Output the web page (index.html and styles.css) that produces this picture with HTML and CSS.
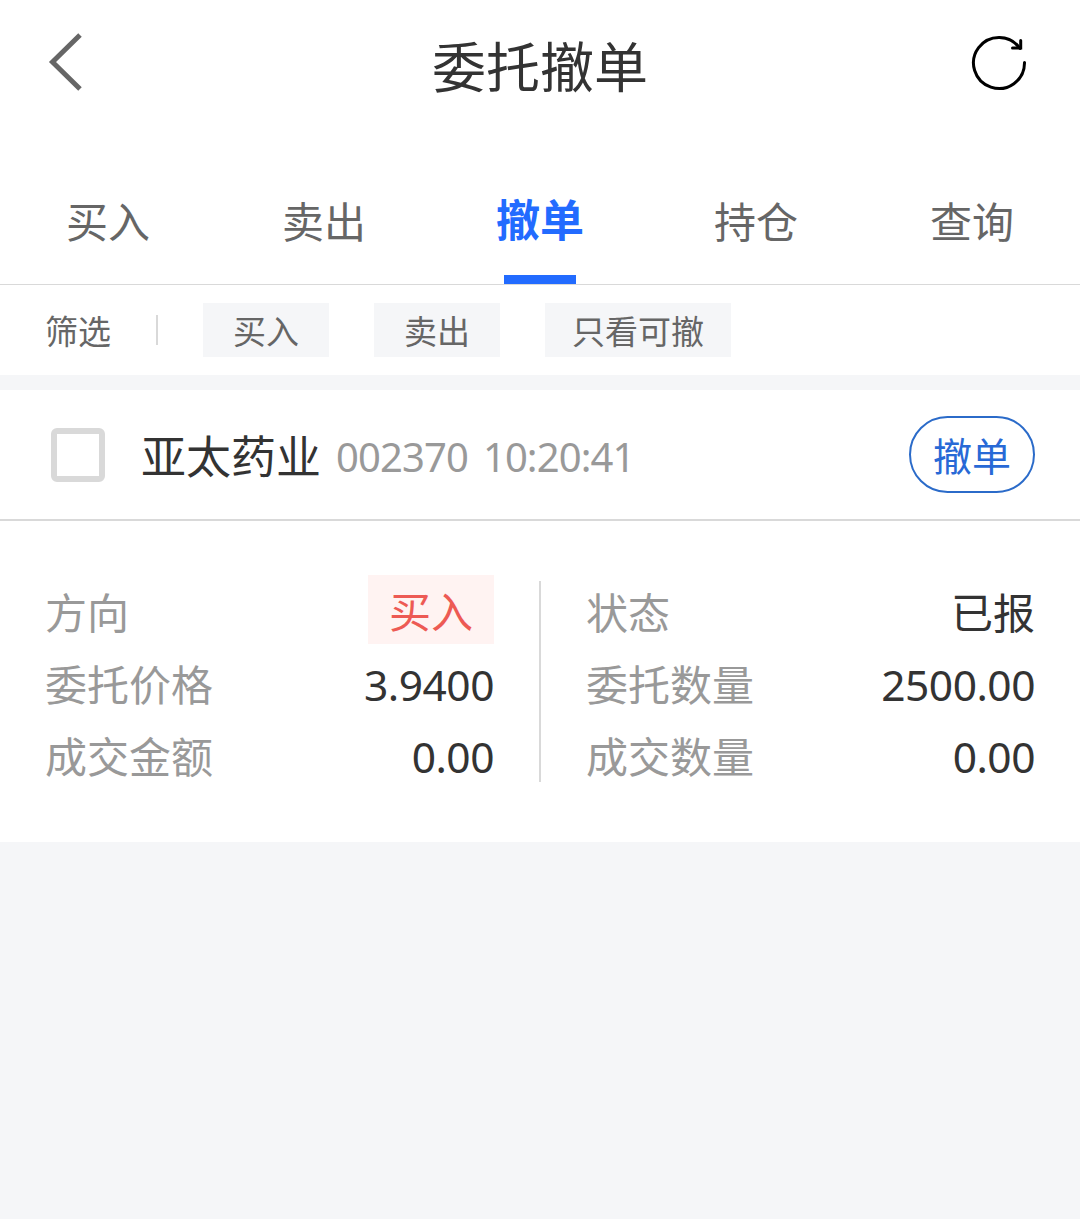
FILE: index.html
```html
<!DOCTYPE html>
<html lang="zh-CN">
<head>
<meta charset="utf-8">
<title>委托撤单</title>
<link rel="stylesheet" href="styles.css">
</head>
<body>
<header class="header">
  <svg class="icon" width="60" height="64" viewBox="0 0 60 64" fill="none" stroke="#666" stroke-width="5"><path d="M36 5 8.500 32 36 59"/></svg>
  <h1 class="title">委托撤单</h1>
  <svg class="icon" width="60" height="60" viewBox="0 0 60 60" fill="none" stroke="#000" stroke-width="3"><path d="M55.500 29.500V30A25.500 25.500 0 1 1 51 15.500" stroke-linecap="round"/><path d="M51.700 7.500V15H43.500" stroke-linecap="round"/></svg>
</header>
<nav class="tabs">
  <a class="tab">买入</a>
  <a class="tab">卖出</a>
  <a class="tab active">撤单</a>
  <a class="tab">持仓</a>
  <a class="tab">查询</a>
</nav>
<section class="filters">
  <span class="filter-label">筛选</span>
  <span class="chip">买入</span>
  <span class="chip">卖出</span>
  <span class="chip wide">只看可撤</span>
</section>
<article class="order">
  <div class="order-head">
    <span class="checkbox"></span>
    <span class="name">亚太药业</span>
    <span class="meta">002370</span>
    <span class="meta">10:20:41</span>
    <button class="cancel">撤单</button>
  </div>
  <div class="details">
    <dl class="column">
      <div class="row"><dt>方向</dt><dd class="badge">买入</dd></div>
      <div class="row"><dt>委托价格</dt><dd class="number">3.9400</dd></div>
      <div class="row"><dt>成交金额</dt><dd class="number">0.00</dd></div>
    </dl>
    <span class="divider"></span>
    <dl class="column">
      <div class="row"><dt>状态</dt><dd>已报</dd></div>
      <div class="row"><dt>委托数量</dt><dd class="number">2500.00</dd></div>
      <div class="row"><dt>成交数量</dt><dd class="number">0.00</dd></div>
    </dl>
  </div>
</article>
</body>
</html>
```
FILE: styles.css
```css
* { box-sizing: border-box; margin: 0; padding: 0; }
body {
  min-height: 1219px;
  background: #f5f6f8;
  color: #333;
  font-family: "Noto Sans CJK SC", sans-serif;
}
.header {
  display: grid;
  grid-template-columns: 67px 1fr 60px;
  height: 158px;
  padding: 30px 51px 0 44px;
  background: #fff;
}
.header .icon:last-child { margin-top: 3px; }
.title {
  font-size: 54px;
  font-weight: 400;
  line-height: 69px;
  text-align: center;
}
.tabs {
  display: grid;
  grid-template-columns: repeat(5, 1fr);
  height: 127px;
  background: #fff;
  border-bottom: 1px solid #d9d9d9;
}
.tab {
  display: flex;
  flex-direction: column;
  align-items: center;
  color: #666;
  font-size: 42px;
  line-height: 124px;
}
.tab.active {
  padding-top: 3px;
  color: #226bff;
  font-size: 44px;
  font-weight: 700;
  line-height: 114px;
}
.tab.active::after { content: ""; width: 72px; height: 9px; background: #226bff; }
.filters {
  display: flex;
  align-items: center;
  gap: 45px;
  height: 90px;
  padding-left: 45px;
  background: #fff;
  color: #666;
  font-size: 33px;
}
.filter-label {
  width: 113px;
  line-height: 30px;
  border-right: 2px solid #d9d9d9;
}
.chip {
  width: 126px;
  height: 54px;
  background: #f5f6f8;
  line-height: 55px;
  text-align: center;
}
.chip.wide { width: 186px; }
.order { margin-top: 15px; background: #fff; }
.order-head {
  display: flex;
  align-items: center;
  height: 131px;
  padding: 0 45px 0 51px;
  border-bottom: 2px solid #d9d9d9;
}
.checkbox { width: 54px; height: 54px; border: 6px solid #d9d9d9; border-radius: 6px; }
.name { margin-left: 36px; font-size: 45px; line-height: 60px; }
.meta {
  margin-left: 15px;
  padding-top: 4px;
  color: #999;
  font-family: "Noto Sans", sans-serif;
  font-size: 40px;
  letter-spacing: -0.9px;
  line-height: 60px;
}
.cancel {
  width: 126px;
  height: 77px;
  margin-left: auto;
  border: 2px solid #2b6bc9;
  border-radius: 39px;
  background: #fff;
  color: #2869d6;
  font: 400 39px/73px "Noto Sans CJK SC", sans-serif;
}
.details {
  display: flex;
  justify-content: space-between;
  height: 321px;
  padding: 55px 45px 0;
  font-size: 42px;
  line-height: 69px;
}
.column { width: 449px; }
.row { display: flex; justify-content: space-between; height: 72px; }
.row dt { color: #999; }
.number {
  font-family: "Noto Sans", sans-serif;
  font-size: 42.5px;
  letter-spacing: -0.5px;
  line-height: 73px;
}
.badge {
  width: 126px;
  height: 69px;
  margin-top: -1px;
  background: #fff3f2;
  color: #ed5a54;
  text-align: center;
}
.divider { width: 2px; height: 201px; margin-top: 5px; background: #d9d9d9; }
```
